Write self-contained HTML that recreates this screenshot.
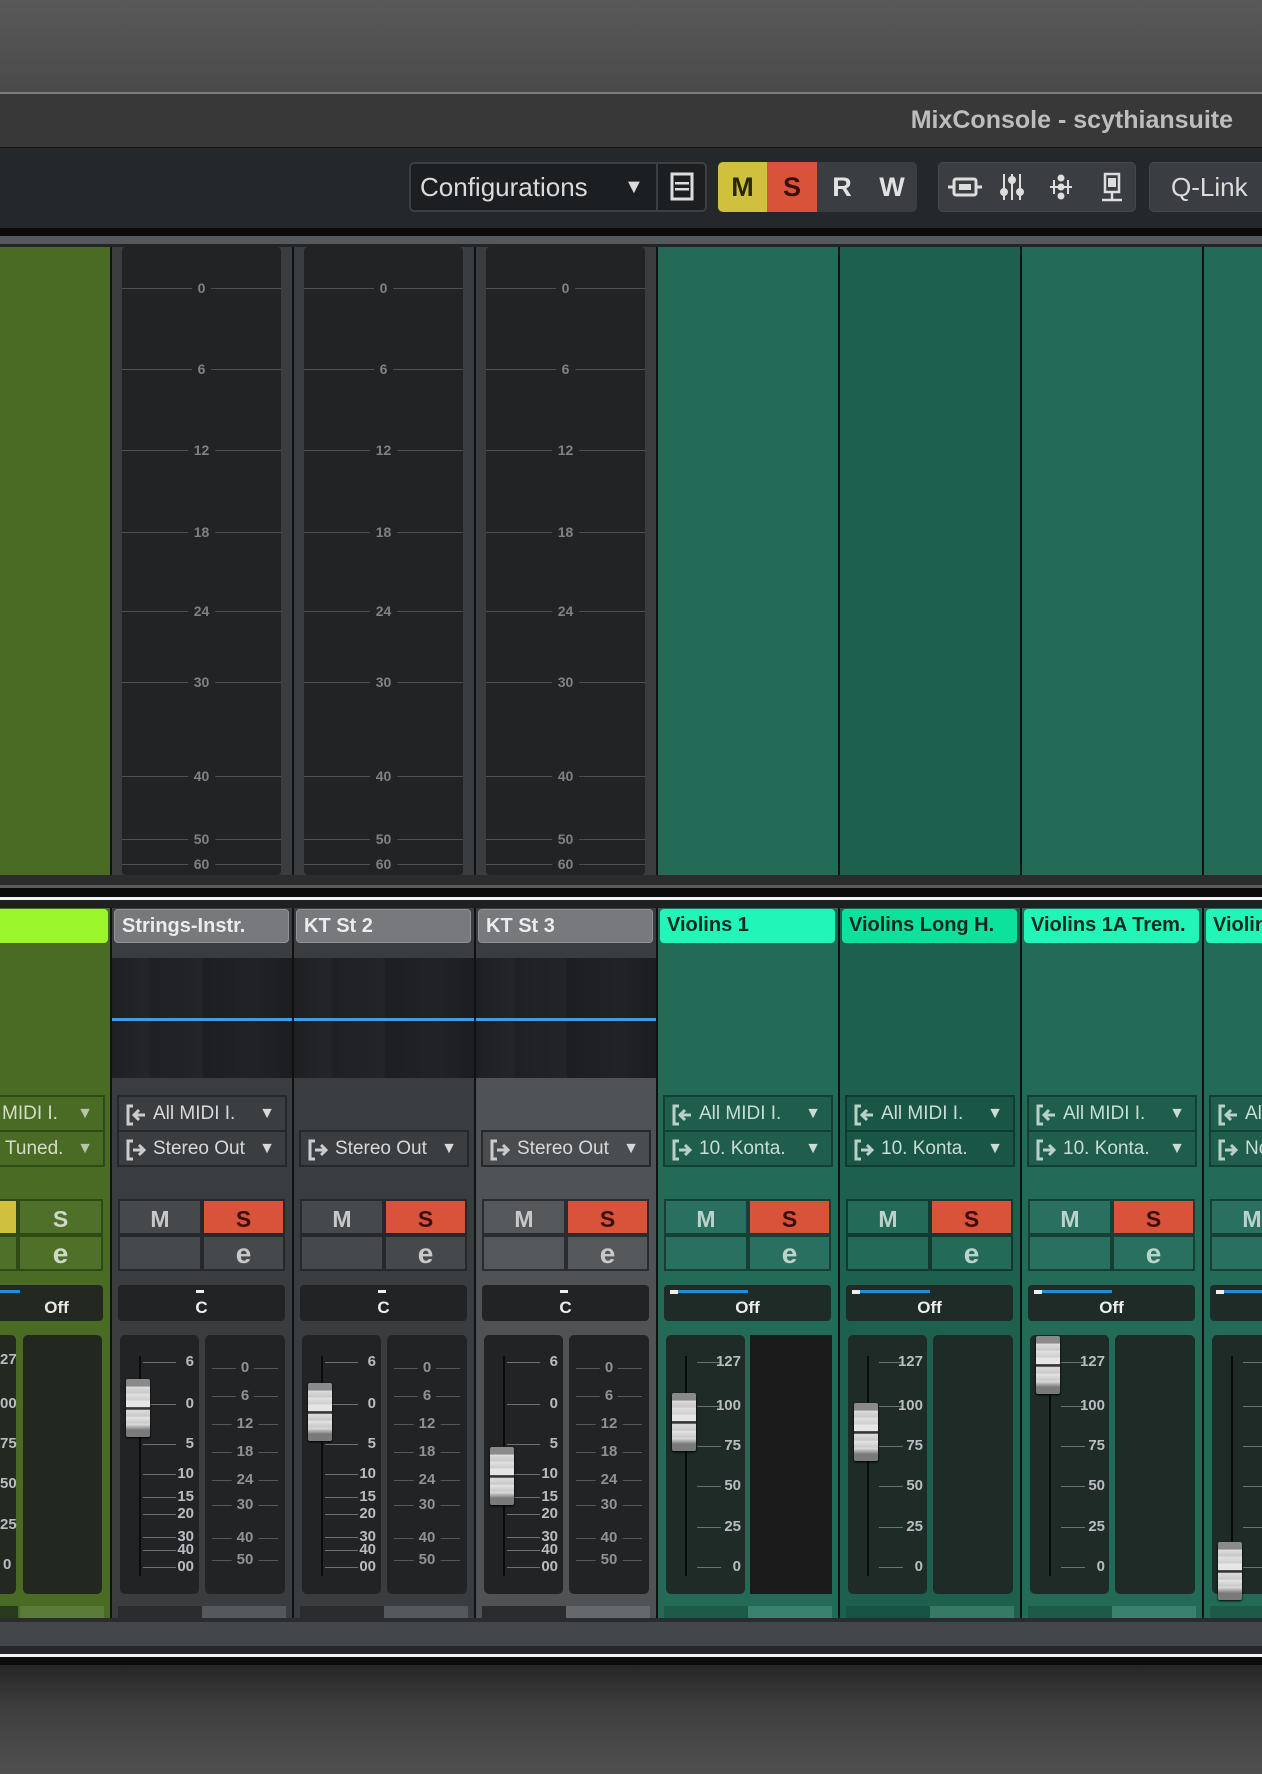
<!DOCTYPE html>
<html><head><meta charset="utf-8"><style>
*{margin:0;padding:0;box-sizing:border-box}
body{width:1262px;height:1774px;overflow:hidden;background:#111;font-family:"Liberation Sans",Arial,sans-serif;position:relative}
.a{position:absolute}
.strip{position:absolute;top:0;width:180px;height:1774px;overflow:hidden}
.top{position:absolute;left:0;top:247px;width:100%;height:628px}
.low{position:absolute;left:0;top:908px;width:100%;height:710px}
.mbox{position:absolute;left:10px;top:0;width:159px;height:628px;background:#222324;border-radius:4px}
.ms{position:absolute;left:0;width:159px;height:1px;background:#4e5052}
.ms b{position:absolute;left:50%;top:-8px;transform:translateX(-50%);background:#222324;padding:0 6px;font-size:14px;color:#7e8185;line-height:16px}
.lbl{position:absolute;left:2px;top:1px;width:175px;height:34px;border-radius:4px;font-weight:bold;font-size:20px;line-height:32px;padding-left:7px;white-space:nowrap;overflow:hidden}
.lg{background:#77797c;border:1px solid #909295;color:#ececec}
.lt{background:#22f5b8;color:#0c2a20}
.ltd{background:#0de29c;color:#0c2a20}
.met{position:absolute;left:0;top:50px;width:100%;height:120px;background:linear-gradient(90deg,#1d1f22 0,#23252a 20%,#1e2024 22%,#222428 50%,#1c1e21 51%,#202226 80%,#1b1d20 100%)}
.blue{position:absolute;left:0;top:110px;width:100%;height:3px;background:#3aa0e6}
.rt{position:absolute;left:5px;width:170px;height:37px;border:2px solid #26282b;font-size:19px;line-height:33px;white-space:nowrap;overflow:hidden}
.rt svg{position:absolute;left:6px;top:7px}
.rt span{position:absolute;left:34px;top:0}
.rt i{position:absolute;right:10px;top:0;font-style:normal;font-size:16px}
.btn{position:absolute;height:36px;font-weight:bold;font-size:23px;text-align:center;line-height:36px}
.e{font-size:28px;font-style:normal;line-height:34px}
.pan{position:absolute;left:6px;top:377px;width:167px;height:36px;border-radius:4px;text-align:center;font-weight:bold;font-size:17px;line-height:46px}
.fl{position:absolute;left:8px;top:427px;width:79px;height:259px;border-radius:5px}
.fr{position:absolute;left:93px;top:427px;width:80px;height:259px;border-radius:5px}
.trk{position:absolute;left:27px;top:448px;width:2px;height:220px;background:#0b0b0b}
.sk{position:absolute;height:1px}
.sk i{position:absolute;left:0;top:0;height:1px;background:#6d7174}
.sk b{position:absolute;top:-9px;font-size:15px;line-height:18px;color:#b9bdc1;text-align:right}
.sr{position:absolute;left:100px;width:66px;height:1px;background:#55585b}
.sr b{position:absolute;left:50%;top:-9px;transform:translateX(-50%);padding:0 5px;font-size:15px;line-height:18px;color:#8e9296;font-weight:bold}
.cap{position:absolute;left:14px;width:24px;height:58px;border-radius:2px;background:linear-gradient(#8a8a8a 0,#8a8a8a 12%,#dcdcdc 14%,#c8c8c8 24%,#e0e0e0 26%,#cfcfcf 36%,#e6e6e6 38%,#e6e6e6 48%,#333 49%,#333 52%,#dcdcdc 54%,#c9c9c9 64%,#e2e2e2 66%,#cacaca 76%,#dcdcdc 78%,#7a7a7a 88%,#7a7a7a 100%);box-shadow:0 1px 2px #000}
.bv{position:absolute;top:698px;height:20px}
</style></head><body>

<div class="a" style="left:0;top:0;width:1262px;height:92px;background:linear-gradient(#595959,#4a4a4a)"></div>
<div class="a" style="left:0;top:92px;width:1262px;height:2px;background:#7c7c7c"></div>
<div class="a" style="left:0;top:94px;width:1262px;height:54px;background:#383838"></div>
<div class="a" style="left:0;top:147px;width:1262px;height:1px;background:#111"></div>
<div class="a" style="right:29px;top:104px;font-weight:bold;font-size:25px;color:#bdbdbd;line-height:32px">MixConsole - scythiansuite</div>
<div class="a" style="left:0;top:148px;width:1262px;height:80px;background:#25282b"></div>
<div class="a" style="left:0;top:228px;width:1262px;height:8px;background:#0b0b0b"></div>
<div class="a" style="left:0;top:236px;width:1262px;height:8px;background:#56595c"></div>
<div class="a" style="left:0;top:244px;width:1262px;height:3px;background:#222426"></div>

<div class="a" style="left:409px;top:162px;width:298px;height:50px;border:2px solid #3c3f43;border-radius:5px;background:#1c1f22"></div>
<div class="a" style="left:420px;top:170px;font-size:26px;color:#dadada;line-height:34px">Configurations</div>
<div class="a" style="left:624px;top:172px;font-size:20px;color:#dadada;line-height:30px">▼</div>
<div class="a" style="left:656px;top:164px;width:2px;height:46px;background:#3c3f43"></div>
<svg class="a" style="left:670px;top:172px" width="24" height="30"><rect x="2" y="2" width="20" height="25" fill="none" stroke="#ddd" stroke-width="3"/><rect x="5" y="10" width="14" height="2.5" fill="#ddd"/><rect x="5" y="16" width="14" height="2.5" fill="#ddd"/></svg>
<div class="a" style="left:718px;top:162px;width:199px;height:50px;border-radius:5px;background:#3a3d41;overflow:hidden">
 <div class="a" style="left:0;top:0;width:49px;height:50px;background:#cfc13d;color:#2a2608;font-weight:bold;font-size:27px;text-align:center;line-height:50px">M</div>
 <div class="a" style="left:49px;top:0;width:50px;height:50px;background:#d9533a;color:#3a0e06;font-weight:bold;font-size:27px;text-align:center;line-height:50px">S</div>
 <div class="a" style="left:99px;top:0;width:50px;height:50px;color:#e2e2e2;font-weight:bold;font-size:27px;text-align:center;line-height:50px">R</div>
 <div class="a" style="left:149px;top:0;width:50px;height:50px;color:#e2e2e2;font-weight:bold;font-size:27px;text-align:center;line-height:50px">W</div>
</div>
<div class="a" style="left:938px;top:162px;width:198px;height:50px;border-radius:5px;background:#3a3d41;border:1px solid #45484c"></div>
<svg class="a" style="left:938px;top:162px" width="198" height="50" fill="none" stroke="#ddd" stroke-width="3">
 <path d="M10 25h6M44 25h-6"/><rect x="16" y="17" width="22" height="16" rx="2"/><rect x="21" y="22" width="12" height="6" fill="#ddd" stroke="none"/>
 <path d="M66 12v26M74 12v26M82 12v26" stroke-width="2"/><circle cx="66" cy="30" r="4" fill="#ddd" stroke="none"/><circle cx="74" cy="18" r="4" fill="#ddd" stroke="none"/><circle cx="82" cy="30" r="4" fill="#ddd" stroke="none"/>
 <path d="M112 25h22M116 18v14M130 18v14" stroke-width="2"/><circle cx="123" cy="16" r="3.5" fill="#ddd" stroke="none"/><circle cx="123" cy="25" r="3.5" fill="#ddd" stroke="none"/><circle cx="123" cy="34" r="3.5" fill="#ddd" stroke="none"/>
 <rect x="167" y="12" width="14" height="18" stroke-width="2.5"/><path d="M174 30v7M164 38h20" stroke-width="2.5"/><rect x="170" y="16" width="8" height="9" fill="#ddd" stroke="none"/>
</svg>
<div class="a" style="left:1149px;top:162px;width:120px;height:50px;border-radius:5px;background:#3a3d41;border:1px solid #45484c"></div>
<div class="a" style="left:1171px;top:170px;font-size:26px;color:#dcdcdc;line-height:34px">Q-Link</div>

<!-- STRIP 0 green partial -->
<div class="strip" style="left:0;width:110px">
 <div class="top" style="background:#4a6b24"></div>
 <div class="low" style="background:#4a6b24">
  <div class="lbl" style="left:-80px;width:188px;background:#9af52a"></div>
  <div class="rt" style="left:-70px;top:187px;width:175px;border-color:#2f4a16;color:#d6dccb"><span style="left:70px">MIDI I.</span><i style="color:#b8c4ad">▼</i></div>
  <div class="rt" style="left:-70px;top:222px;width:175px;border-color:#2f4a16;color:#d6dccb"><span style="left:73px">Tuned.</span><i style="color:#b8c4ad">▼</i></div>
  <div class="btn" style="left:-40px;top:291px;width:58px;background:#cfc13d;border:2px solid #2f4a16"></div>
  <div class="btn" style="left:18px;top:291px;width:85px;background:#4e7028;border:2px solid #2f4a16;color:#cfd8c6">S</div>
  <div class="btn" style="left:-40px;top:327px;width:58px;background:#4e7028;border:2px solid #2f4a16"></div>
  <div class="btn e" style="left:18px;top:327px;width:85px;background:#4e7028;border:2px solid #2f4a16;color:#cfd8c6">e</div>
  <div class="pan" style="left:-60px;width:163px;background:#232820;color:#e8e8e8;text-indent:70px">Off</div>
  <div class="a" style="left:0;top:382px;width:20px;height:3px;background:#1c8fd8"></div>
  <div class="fl" style="left:-60px;width:76px;background:#232820"></div>
  <div class="a" style="left:0;top:443px;font-size:15px;color:#b9bdc1;font-weight:bold;line-height:18px">27</div>
  <div class="a" style="left:0;top:487px;font-size:15px;color:#b9bdc1;font-weight:bold;line-height:18px">00</div>
  <div class="a" style="left:0;top:527px;font-size:15px;color:#b9bdc1;font-weight:bold;line-height:18px">75</div>
  <div class="a" style="left:0;top:567px;font-size:15px;color:#b9bdc1;font-weight:bold;line-height:18px">50</div>
  <div class="a" style="left:0;top:608px;font-size:15px;color:#b9bdc1;font-weight:bold;line-height:18px">25</div>
  <div class="a" style="left:3px;top:648px;font-size:15px;color:#b9bdc1;font-weight:bold;line-height:18px">0</div>
  <div class="fr" style="left:23px;width:79px;background:#222820"></div>
  <div class="bv" style="left:0;width:18px;background:#2a3a1e"></div>
  <div class="bv" style="left:20px;width:84px;background:#5a7a3a"></div>
 </div>
</div>

<!-- STRIP 1 -->
<div class="strip" style="left:112px">
 <div class="top" style="background:#3a3d40"><div class="mbox">
  <div class="ms" style="top:41px"><b>0</b></div><div class="ms" style="top:122px"><b>6</b></div><div class="ms" style="top:203px"><b>12</b></div><div class="ms" style="top:285px"><b>18</b></div><div class="ms" style="top:364px"><b>24</b></div><div class="ms" style="top:435px"><b>30</b></div><div class="ms" style="top:529px"><b>40</b></div><div class="ms" style="top:592px"><b>50</b></div><div class="ms" style="top:617px"><b>60</b></div>
 </div></div>
 <div class="low" style="background:#3a3d40">
  <div class="lbl lg">Strings-Instr.</div>
  <div class="met"></div><div class="blue"></div>
  <div class="rt" style="top:187px;background:#3b3e41;color:#d8d8d8"><svg width="22" height="22" fill="none" stroke="#ccc" stroke-width="3"><path d="M8 2H3v18h5"/><path d="M9 11h11M14 6l-5 5 5 5"/></svg><span>All MIDI I.</span><i>▼</i></div>
  <div class="rt" style="top:222px;background:#3b3e41;color:#d8d8d8"><svg width="22" height="22" fill="none" stroke="#ccc" stroke-width="3"><path d="M8 2H3v18h5"/><path d="M8 11h11M14 6l5 5-5 5"/></svg><span>Stereo Out</span><i>▼</i></div>
  <div class="btn" style="left:6px;top:291px;width:84px;background:#46494c;border:2px solid #26282b;color:#c8c8c8">M</div>
  <div class="btn" style="left:90px;top:291px;width:83px;background:#d9533a;border:2px solid #26282b;color:#3a0e06">S</div>
  <div class="btn" style="left:6px;top:327px;width:84px;background:#46494c;border:2px solid #26282b"></div>
  <div class="btn e" style="left:90px;top:327px;width:83px;background:#46494c;border:2px solid #26282b;color:#c8c8c8">e</div>
  <div class="pan" style="background:#212325;color:#eee">C</div><div class="a" style="left:84px;top:382px;width:8px;height:3px;background:#eee"></div>
  <div class="fl" style="background:#212325"></div><div class="fr" style="background:#212325"></div>
 </div>
</div>

<!-- STRIP 2 -->
<div class="strip" style="left:294px">
 <div class="top" style="background:#3a3d40"><div class="mbox">
  <div class="ms" style="top:41px"><b>0</b></div><div class="ms" style="top:122px"><b>6</b></div><div class="ms" style="top:203px"><b>12</b></div><div class="ms" style="top:285px"><b>18</b></div><div class="ms" style="top:364px"><b>24</b></div><div class="ms" style="top:435px"><b>30</b></div><div class="ms" style="top:529px"><b>40</b></div><div class="ms" style="top:592px"><b>50</b></div><div class="ms" style="top:617px"><b>60</b></div>
 </div></div>
 <div class="low" style="background:#3a3d40">
  <div class="lbl lg">KT St 2</div>
  <div class="met"></div><div class="blue"></div>
  <div class="rt" style="top:222px;background:#3b3e41;color:#d8d8d8"><svg width="22" height="22" fill="none" stroke="#ccc" stroke-width="3"><path d="M8 2H3v18h5"/><path d="M8 11h11M14 6l5 5-5 5"/></svg><span>Stereo Out</span><i>▼</i></div>
  <div class="btn" style="left:6px;top:291px;width:84px;background:#46494c;border:2px solid #26282b;color:#c8c8c8">M</div>
  <div class="btn" style="left:90px;top:291px;width:83px;background:#d9533a;border:2px solid #26282b;color:#3a0e06">S</div>
  <div class="btn" style="left:6px;top:327px;width:84px;background:#46494c;border:2px solid #26282b"></div>
  <div class="btn e" style="left:90px;top:327px;width:83px;background:#46494c;border:2px solid #26282b;color:#c8c8c8">e</div>
  <div class="pan" style="background:#212325;color:#eee">C</div><div class="a" style="left:84px;top:382px;width:8px;height:3px;background:#eee"></div>
  <div class="fl" style="background:#212325"></div><div class="fr" style="background:#212325"></div>
 </div>
</div>

<!-- STRIP 3 -->
<div class="strip" style="left:476px">
 <div class="top" style="background:#3a3d40"><div class="mbox">
  <div class="ms" style="top:41px"><b>0</b></div><div class="ms" style="top:122px"><b>6</b></div><div class="ms" style="top:203px"><b>12</b></div><div class="ms" style="top:285px"><b>18</b></div><div class="ms" style="top:364px"><b>24</b></div><div class="ms" style="top:435px"><b>30</b></div><div class="ms" style="top:529px"><b>40</b></div><div class="ms" style="top:592px"><b>50</b></div><div class="ms" style="top:617px"><b>60</b></div>
 </div></div>
 <div class="low" style="background:#505356">
  <div class="a" style="left:0;top:0;width:182px;height:50px;background:#3a3d40"></div>
  <div class="lbl lg">KT St 3</div>
  <div class="met"></div><div class="blue"></div>
  <div class="rt" style="top:222px;background:#4a4d50;color:#d8d8d8"><svg width="22" height="22" fill="none" stroke="#ccc" stroke-width="3"><path d="M8 2H3v18h5"/><path d="M8 11h11M14 6l5 5-5 5"/></svg><span>Stereo Out</span><i>▼</i></div>
  <div class="btn" style="left:6px;top:291px;width:84px;background:#55585b;border:2px solid #2a2c2f;color:#c8c8c8">M</div>
  <div class="btn" style="left:90px;top:291px;width:83px;background:#d9533a;border:2px solid #2a2c2f;color:#3a0e06">S</div>
  <div class="btn" style="left:6px;top:327px;width:84px;background:#55585b;border:2px solid #2a2c2f"></div>
  <div class="btn e" style="left:90px;top:327px;width:83px;background:#55585b;border:2px solid #2a2c2f;color:#c8c8c8">e</div>
  <div class="pan" style="background:#212325;color:#eee">C</div><div class="a" style="left:84px;top:382px;width:8px;height:3px;background:#eee"></div>
  <div class="fl" style="background:#212325"></div><div class="fr" style="background:#212325"></div>
 </div>
</div>

<!-- STRIP 4 -->
<div class="strip" style="left:658px">
 <div class="top" style="background:#236b57"></div>
 <div class="low" style="background:#236b57">
  <div class="lbl lt">Violins 1</div>
  <div class="rt" style="top:187px;background:#1f5e4c;border-color:#153f34;color:#c9dcd5"><svg width="22" height="22" fill="none" stroke="#b9d0c8" stroke-width="3"><path d="M8 2H3v18h5"/><path d="M9 11h11M14 6l-5 5 5 5"/></svg><span>All MIDI I.</span><i>▼</i></div>
  <div class="rt" style="top:222px;background:#1f5e4c;border-color:#153f34;color:#c9dcd5"><svg width="22" height="22" fill="none" stroke="#b9d0c8" stroke-width="3"><path d="M8 2H3v18h5"/><path d="M8 11h11M14 6l5 5-5 5"/></svg><span>10. Konta.</span><i>▼</i></div>
  <div class="btn" style="left:6px;top:291px;width:84px;background:#2a7060;border:2px solid #173f34;color:#bcd3cb">M</div>
  <div class="btn" style="left:90px;top:291px;width:83px;background:#d9533a;border:2px solid #173f34;color:#3a0e06">S</div>
  <div class="btn" style="left:6px;top:327px;width:84px;background:#2a7060;border:2px solid #173f34"></div>
  <div class="btn e" style="left:90px;top:327px;width:83px;background:#2a7060;border:2px solid #173f34;color:#bcd3cb">e</div>
  <div class="pan" style="background:#1e2b27;color:#eee">Off</div><div class="a" style="left:12px;top:382px;width:8px;height:4px;background:#eee"></div><div class="a" style="left:20px;top:382px;width:70px;height:3px;background:#1c8fd8"></div>
  <div class="fl" style="background:#1e2b27"></div>
  <div class="fr" style="left:92px;width:82px;background:#1b1b1b;border-radius:0"></div>
  <div class="bv" style="left:6px;width:84px;background:#1d5a48"></div><div class="bv" style="left:90px;width:84px;background:#3a806c"></div>
 </div>
</div>

<!-- STRIP 5 -->
<div class="strip" style="left:840px">
 <div class="top" style="background:#1d604e"></div>
 <div class="low" style="background:#1d604e">
  <div class="lbl ltd">Violins Long H.</div>
  <div class="rt" style="top:187px;background:#1a5645;border-color:#123a30;color:#c9dcd5"><svg width="22" height="22" fill="none" stroke="#b9d0c8" stroke-width="3"><path d="M8 2H3v18h5"/><path d="M9 11h11M14 6l-5 5 5 5"/></svg><span>All MIDI I.</span><i>▼</i></div>
  <div class="rt" style="top:222px;background:#1a5645;border-color:#123a30;color:#c9dcd5"><svg width="22" height="22" fill="none" stroke="#b9d0c8" stroke-width="3"><path d="M8 2H3v18h5"/><path d="M8 11h11M14 6l5 5-5 5"/></svg><span>10. Konta.</span><i>▼</i></div>
  <div class="btn" style="left:6px;top:291px;width:84px;background:#246a58;border:2px solid #143a30;color:#bcd3cb">M</div>
  <div class="btn" style="left:90px;top:291px;width:83px;background:#d9533a;border:2px solid #143a30;color:#3a0e06">S</div>
  <div class="btn" style="left:6px;top:327px;width:84px;background:#246a58;border:2px solid #143a30"></div>
  <div class="btn e" style="left:90px;top:327px;width:83px;background:#246a58;border:2px solid #143a30;color:#bcd3cb">e</div>
  <div class="pan" style="background:#1e2b27;color:#eee">Off</div><div class="a" style="left:12px;top:382px;width:8px;height:4px;background:#eee"></div><div class="a" style="left:20px;top:382px;width:70px;height:3px;background:#1c8fd8"></div>
  <div class="fl" style="background:#1e2b27"></div><div class="fr" style="background:#1e2b27"></div>
  <div class="bv" style="left:6px;width:84px;background:#185443"></div><div class="bv" style="left:90px;width:84px;background:#367a66"></div>
 </div>
</div>

<!-- STRIP 6 -->
<div class="strip" style="left:1022px">
 <div class="top" style="background:#236b57"></div>
 <div class="low" style="background:#236b57">
  <div class="lbl lt">Violins 1A Trem.</div>
  <div class="rt" style="top:187px;background:#1f5e4c;border-color:#153f34;color:#c9dcd5"><svg width="22" height="22" fill="none" stroke="#b9d0c8" stroke-width="3"><path d="M8 2H3v18h5"/><path d="M9 11h11M14 6l-5 5 5 5"/></svg><span>All MIDI I.</span><i>▼</i></div>
  <div class="rt" style="top:222px;background:#1f5e4c;border-color:#153f34;color:#c9dcd5"><svg width="22" height="22" fill="none" stroke="#b9d0c8" stroke-width="3"><path d="M8 2H3v18h5"/><path d="M8 11h11M14 6l5 5-5 5"/></svg><span>10. Konta.</span><i>▼</i></div>
  <div class="btn" style="left:6px;top:291px;width:84px;background:#2a7060;border:2px solid #173f34;color:#bcd3cb">M</div>
  <div class="btn" style="left:90px;top:291px;width:83px;background:#d9533a;border:2px solid #173f34;color:#3a0e06">S</div>
  <div class="btn" style="left:6px;top:327px;width:84px;background:#2a7060;border:2px solid #173f34"></div>
  <div class="btn e" style="left:90px;top:327px;width:83px;background:#2a7060;border:2px solid #173f34;color:#bcd3cb">e</div>
  <div class="pan" style="background:#1e2b27;color:#eee">Off</div><div class="a" style="left:12px;top:382px;width:8px;height:4px;background:#eee"></div><div class="a" style="left:20px;top:382px;width:70px;height:3px;background:#1c8fd8"></div>
  <div class="fl" style="background:#1e2b27"></div><div class="fr" style="background:#1e2b27"></div>
  <div class="bv" style="left:6px;width:84px;background:#1d5a48"></div><div class="bv" style="left:90px;width:84px;background:#3a806c"></div>
 </div>
</div>

<!-- STRIP 7 -->
<div class="strip" style="left:1204px;width:58px">
 <div class="top" style="background:#236b57"></div>
 <div class="low" style="background:#236b57">
  <div class="lbl lt">Violins 1B</div>
  <div class="rt" style="top:187px;background:#1f5e4c;border-color:#153f34;color:#c9dcd5"><svg width="22" height="22" fill="none" stroke="#b9d0c8" stroke-width="3"><path d="M8 2H3v18h5"/><path d="M9 11h11M14 6l-5 5 5 5"/></svg><span>All MIDI I.</span></div>
  <div class="rt" style="top:222px;background:#1f5e4c;border-color:#153f34;color:#c9dcd5"><svg width="22" height="22" fill="none" stroke="#b9d0c8" stroke-width="3"><path d="M8 2H3v18h5"/><path d="M8 11h11M14 6l5 5-5 5"/></svg><span>Not</span></div>
  <div class="btn" style="left:6px;top:291px;width:84px;background:#2a7060;border:2px solid #173f34;color:#bcd3cb">M</div>
  <div class="btn" style="left:6px;top:327px;width:84px;background:#2a7060;border:2px solid #173f34"></div>
  <div class="pan" style="background:#1e2b27"></div><div class="a" style="left:12px;top:382px;width:8px;height:4px;background:#eee"></div><div class="a" style="left:20px;top:382px;width:70px;height:3px;background:#1c8fd8"></div>
  <div class="fl" style="background:#1e2b27"></div>
  <div class="bv" style="left:6px;width:84px;background:#1d5a48"></div>
 </div>
</div>

<!-- fader scales: dB -->
<div class="a" style="left:112px;top:908px;width:180px;height:700px">
 <div class="trk"></div>
 <div class="sk" style="left:31px;top:454px;width:55px"><i style="width:33px"></i><b style="right:4px">6</b></div>
 <div class="sk" style="left:31px;top:496px;width:55px"><i style="width:33px"></i><b style="right:4px">0</b></div>
 <div class="sk" style="left:31px;top:536px;width:55px"><i style="width:33px"></i><b style="right:4px">5</b></div>
 <div class="sk" style="left:31px;top:566px;width:55px"><i style="width:33px"></i><b style="right:4px">10</b></div>
 <div class="sk" style="left:31px;top:589px;width:55px"><i style="width:33px"></i><b style="right:4px">15</b></div>
 <div class="sk" style="left:31px;top:606px;width:55px"><i style="width:33px"></i><b style="right:4px">20</b></div>
 <div class="sk" style="left:31px;top:629px;width:55px"><i style="width:33px"></i><b style="right:4px">30</b></div>
 <div class="sk" style="left:31px;top:642px;width:55px"><i style="width:33px"></i><b style="right:4px">40</b></div>
 <div class="sk" style="left:31px;top:659px;width:55px"><i style="width:33px"></i><b style="right:4px">00</b></div>
 <div class="sr" style="top:460px"><b style="background:#212325">0</b></div><div class="sr" style="top:488px"><b style="background:#212325">6</b></div><div class="sr" style="top:516px"><b style="background:#212325">12</b></div><div class="sr" style="top:544px"><b style="background:#212325">18</b></div><div class="sr" style="top:572px"><b style="background:#212325">24</b></div><div class="sr" style="top:597px"><b style="background:#212325">30</b></div><div class="sr" style="top:630px"><b style="background:#212325">40</b></div><div class="sr" style="top:652px"><b style="background:#212325">50</b></div>
 <div class="cap" style="top:471px"></div>
 <div class="bv" style="left:6px;width:84px;background:#2a2c2e"></div><div class="bv" style="left:90px;width:84px;background:#56595c"></div>
</div>
<div class="a" style="left:294px;top:908px;width:180px;height:700px">
 <div class="trk"></div>
 <div class="sk" style="left:31px;top:454px;width:55px"><i style="width:33px"></i><b style="right:4px">6</b></div>
 <div class="sk" style="left:31px;top:496px;width:55px"><i style="width:33px"></i><b style="right:4px">0</b></div>
 <div class="sk" style="left:31px;top:536px;width:55px"><i style="width:33px"></i><b style="right:4px">5</b></div>
 <div class="sk" style="left:31px;top:566px;width:55px"><i style="width:33px"></i><b style="right:4px">10</b></div>
 <div class="sk" style="left:31px;top:589px;width:55px"><i style="width:33px"></i><b style="right:4px">15</b></div>
 <div class="sk" style="left:31px;top:606px;width:55px"><i style="width:33px"></i><b style="right:4px">20</b></div>
 <div class="sk" style="left:31px;top:629px;width:55px"><i style="width:33px"></i><b style="right:4px">30</b></div>
 <div class="sk" style="left:31px;top:642px;width:55px"><i style="width:33px"></i><b style="right:4px">40</b></div>
 <div class="sk" style="left:31px;top:659px;width:55px"><i style="width:33px"></i><b style="right:4px">00</b></div>
 <div class="sr" style="top:460px"><b style="background:#212325">0</b></div><div class="sr" style="top:488px"><b style="background:#212325">6</b></div><div class="sr" style="top:516px"><b style="background:#212325">12</b></div><div class="sr" style="top:544px"><b style="background:#212325">18</b></div><div class="sr" style="top:572px"><b style="background:#212325">24</b></div><div class="sr" style="top:597px"><b style="background:#212325">30</b></div><div class="sr" style="top:630px"><b style="background:#212325">40</b></div><div class="sr" style="top:652px"><b style="background:#212325">50</b></div>
 <div class="cap" style="top:475px"></div>
 <div class="bv" style="left:6px;width:84px;background:#2a2c2e"></div><div class="bv" style="left:90px;width:84px;background:#56595c"></div>
</div>
<div class="a" style="left:476px;top:908px;width:180px;height:700px">
 <div class="trk"></div>
 <div class="sk" style="left:31px;top:454px;width:55px"><i style="width:33px"></i><b style="right:4px">6</b></div>
 <div class="sk" style="left:31px;top:496px;width:55px"><i style="width:33px"></i><b style="right:4px">0</b></div>
 <div class="sk" style="left:31px;top:536px;width:55px"><i style="width:33px"></i><b style="right:4px">5</b></div>
 <div class="sk" style="left:31px;top:566px;width:55px"><i style="width:33px"></i><b style="right:4px">10</b></div>
 <div class="sk" style="left:31px;top:589px;width:55px"><i style="width:33px"></i><b style="right:4px">15</b></div>
 <div class="sk" style="left:31px;top:606px;width:55px"><i style="width:33px"></i><b style="right:4px">20</b></div>
 <div class="sk" style="left:31px;top:629px;width:55px"><i style="width:33px"></i><b style="right:4px">30</b></div>
 <div class="sk" style="left:31px;top:642px;width:55px"><i style="width:33px"></i><b style="right:4px">40</b></div>
 <div class="sk" style="left:31px;top:659px;width:55px"><i style="width:33px"></i><b style="right:4px">00</b></div>
 <div class="sr" style="top:460px"><b style="background:#212325">0</b></div><div class="sr" style="top:488px"><b style="background:#212325">6</b></div><div class="sr" style="top:516px"><b style="background:#212325">12</b></div><div class="sr" style="top:544px"><b style="background:#212325">18</b></div><div class="sr" style="top:572px"><b style="background:#212325">24</b></div><div class="sr" style="top:597px"><b style="background:#212325">30</b></div><div class="sr" style="top:630px"><b style="background:#212325">40</b></div><div class="sr" style="top:652px"><b style="background:#212325">50</b></div>
 <div class="cap" style="top:539px"></div>
 <div class="bv" style="left:6px;width:84px;background:#2a2c2e"></div><div class="bv" style="left:90px;width:84px;background:#66696c"></div>
</div>

<!-- velocity scales -->
<div class="a" style="left:658px;top:908px;width:180px;height:700px">
 <div class="trk"></div>
 <div class="sk" style="left:39px;top:454px;width:44px"><i style="width:24px"></i><b style="right:0">127</b></div>
 <div class="sk" style="left:39px;top:498px;width:44px"><i style="width:24px"></i><b style="right:0">100</b></div>
 <div class="sk" style="left:39px;top:538px;width:44px"><i style="width:24px"></i><b style="right:0">75</b></div>
 <div class="sk" style="left:39px;top:578px;width:44px"><i style="width:24px"></i><b style="right:0">50</b></div>
 <div class="sk" style="left:39px;top:619px;width:44px"><i style="width:24px"></i><b style="right:0">25</b></div>
 <div class="sk" style="left:39px;top:659px;width:44px"><i style="width:24px"></i><b style="right:0">0</b></div>
 <div class="cap" style="top:485px"></div>
</div>
<div class="a" style="left:840px;top:908px;width:180px;height:700px">
 <div class="trk"></div>
 <div class="sk" style="left:39px;top:454px;width:44px"><i style="width:24px"></i><b style="right:0">127</b></div>
 <div class="sk" style="left:39px;top:498px;width:44px"><i style="width:24px"></i><b style="right:0">100</b></div>
 <div class="sk" style="left:39px;top:538px;width:44px"><i style="width:24px"></i><b style="right:0">75</b></div>
 <div class="sk" style="left:39px;top:578px;width:44px"><i style="width:24px"></i><b style="right:0">50</b></div>
 <div class="sk" style="left:39px;top:619px;width:44px"><i style="width:24px"></i><b style="right:0">25</b></div>
 <div class="sk" style="left:39px;top:659px;width:44px"><i style="width:24px"></i><b style="right:0">0</b></div>
 <div class="cap" style="top:495px"></div>
</div>
<div class="a" style="left:1022px;top:908px;width:180px;height:700px">
 <div class="trk"></div>
 <div class="sk" style="left:39px;top:454px;width:44px"><i style="width:24px"></i><b style="right:0">127</b></div>
 <div class="sk" style="left:39px;top:498px;width:44px"><i style="width:24px"></i><b style="right:0">100</b></div>
 <div class="sk" style="left:39px;top:538px;width:44px"><i style="width:24px"></i><b style="right:0">75</b></div>
 <div class="sk" style="left:39px;top:578px;width:44px"><i style="width:24px"></i><b style="right:0">50</b></div>
 <div class="sk" style="left:39px;top:619px;width:44px"><i style="width:24px"></i><b style="right:0">25</b></div>
 <div class="sk" style="left:39px;top:659px;width:44px"><i style="width:24px"></i><b style="right:0">0</b></div>
 <div class="cap" style="top:428px"></div>
</div>
<div class="a" style="left:1204px;top:908px;width:58px;height:700px;overflow:hidden">
 <div class="trk"></div>
 <div class="sk" style="left:39px;top:454px;width:24px"><i style="width:24px"></i></div>
 <div class="sk" style="left:39px;top:498px;width:24px"><i style="width:24px"></i></div>
 <div class="sk" style="left:39px;top:538px;width:24px"><i style="width:24px"></i></div>
 <div class="sk" style="left:39px;top:578px;width:24px"><i style="width:24px"></i></div>
 <div class="sk" style="left:39px;top:619px;width:24px"><i style="width:24px"></i></div>
 <div class="sk" style="left:39px;top:659px;width:24px"><i style="width:24px"></i></div>
 <div class="cap" style="top:634px"></div>
</div>

<div class="a" style="left:0;top:875px;width:1262px;height:10px;background:#2a2c2e"></div>
<div class="a" style="left:0;top:885px;width:1262px;height:3px;background:#5a5d60"></div>
<div class="a" style="left:0;top:888px;width:1262px;height:9px;background:#0a0a0a"></div>
<div class="a" style="left:0;top:897px;width:1262px;height:3px;background:#f2f2f2"></div>
<div class="a" style="left:0;top:900px;width:1262px;height:8px;background:#1e2022"></div>

<div class="a" style="left:0;top:1618px;width:1262px;height:4px;background:#2a2c2f"></div>
<div class="a" style="left:0;top:1622px;width:1262px;height:24px;background:#44474a"></div>
<div class="a" style="left:0;top:1646px;width:1262px;height:8px;background:#25272a"></div>
<div class="a" style="left:0;top:1654px;width:1262px;height:3px;background:#f4f4f4"></div>
<div class="a" style="left:0;top:1657px;width:1262px;height:8px;background:#0c0c0c"></div>
<div class="a" style="left:0;top:1665px;width:1262px;height:109px;background:linear-gradient(#262626,#3e3e3e 40%,#505050)"></div>
</body></html>
